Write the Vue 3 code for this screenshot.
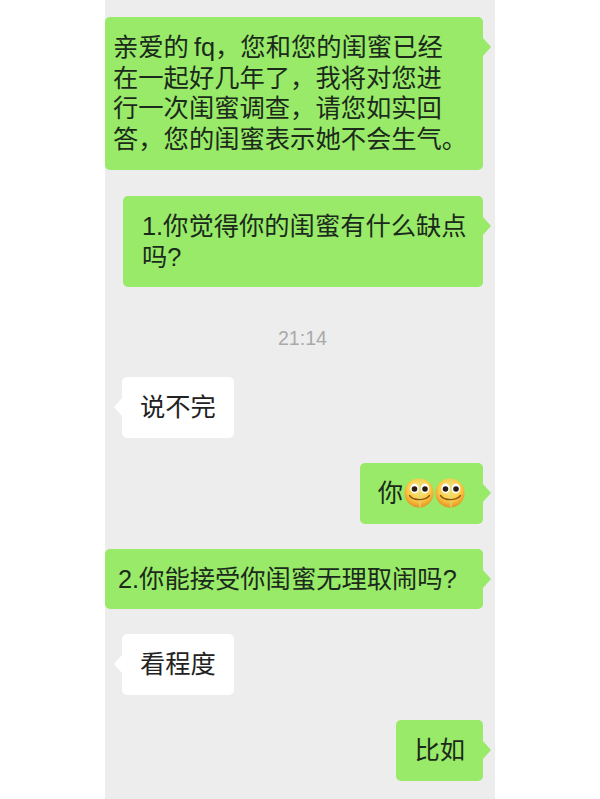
<script setup>
const topMessages = [
  { id: 1, side: 'right', kind: 'intro', lines: ['亲爱的\u2009fq\uFF0C您和您的闺蜜已经', '在一起好几年了\uFF0C我将对您进', '行一次闺蜜调查\uFF0C请您如实回', '答\uFF0C您的闺蜜表示她不会生气。'] },
  { id: 2, side: 'right', kind: 'question', lines: ['1.你觉得你的闺蜜有什么缺点', '吗?'] }
]

const bottomMessages = [
  { id: 3, side: 'left', lines: ['说不完'] },
  { id: 4, side: 'right', lines: ['你'], emoji: 2 },
  { id: 5, side: 'right', kind: 'wide', lines: ['2.你能接受你闺蜜无理取闹吗?'] },
  { id: 6, side: 'left', lines: ['看程度'] },
  { id: 7, side: 'right', lines: ['比如'] }
]
</script>

<template>
  <main class="chat">
    <div
      v-for="msg in topMessages"
      :key="msg.id"
      class="bubble"
      :class="[msg.side, msg.kind]"
    >
      <span v-for="line in msg.lines" :key="line" class="line">{{ line }}</span>
    </div>

    <p class="time">21:14</p>

    <div
      v-for="msg in bottomMessages"
      :key="msg.id"
      class="bubble"
      :class="[msg.side, msg.kind]"
    >
      <span v-for="line in msg.lines" :key="line" class="line">
        {{ line }}
        <svg v-for="n in msg.emoji || 0" :key="n" class="emoji" viewBox="0 0 30 30">
          <defs>
            <radialGradient :id="'face' + n" cx="50%" cy="38%" r="62%">
              <stop offset="0%" stop-color="#fdeb8c" />
              <stop offset="62%" stop-color="#fbcb45" />
              <stop offset="100%" stop-color="#e98f22" />
            </radialGradient>
          </defs>
          <circle cx="15" cy="15" r="14.5" :fill="'url(#face' + n + ')'" />
          <path d="M16 1v28" stroke="#cfe07a" stroke-width="1.2" />
          <ellipse cx="10.5" cy="10.5" rx="4.2" ry="5" fill="#fff" />
          <ellipse cx="21" cy="10.5" rx="4.2" ry="5" fill="#fff" />
          <circle cx="10.5" cy="11" r="2.8" fill="#2a1c10" />
          <circle cx="21" cy="11" r="2.8" fill="#2a1c10" />
          <path d="M5.5 17.5c4 5.5 15.5 5.5 20 0" fill="none" stroke="#8a5512" stroke-width="1.4" stroke-linecap="round" />
        </svg>
      </span>
    </div>
  </main>
</template>

<style scoped>
.chat {
  width: 390px;
  height: 799px;
  margin: 0 auto;
  padding-top: 17px;
  overflow: hidden;
  box-sizing: border-box;
  display: flex;
  flex-direction: column;
  align-items: flex-start;
  background: #ededed;
  font-family: "Liberation Sans", "Noto Sans CJK SC", sans-serif;
  font-size: 25.3px;
  line-height: 30.7px;
  color: #1b2a1b;
}

.bubble {
  flex: none;
  position: relative;
  box-sizing: border-box;
  padding: 15px 18px;
  margin-bottom: 25px;
  border-radius: 5px;
  background: #98ea68;
  white-space: nowrap;
}

.bubble.right {
  align-self: flex-end;
  margin-right: 12px;
}

.bubble.left {
  margin-left: 17px;
  background: #fff;
  color: #222;
}

.bubble::after {
  content: "";
  position: absolute;
  top: 21px;
  width: 0;
  height: 0;
  border-top: 9px solid transparent;
  border-bottom: 9px solid transparent;
}

.bubble.right::after {
  right: -8px;
  border-left: 8px solid #98ea68;
}

.bubble.left::after {
  left: -8px;
  border-right: 8px solid #fff;
}

.bubble.intro {
  width: 378px;
  padding-left: 8px;
  margin-bottom: 26px;
}

.bubble.question {
  width: 360px;
  padding-left: 19px;
}

.bubble.wide {
  width: 378px;
  padding-left: 13px;
}

.line {
  display: flex;
  align-items: center;
}

.emoji {
  width: 30px;
  height: 30px;
  flex: none;
  margin-left: 1px;
}

.time {
  flex: none;
  align-self: center;
  margin: 14px 0 27px;
  padding-left: 5px;
  font-size: 19.6px;
  line-height: 24px;
  color: #a9a9a9;
}
</style>

<style>
body {
  background: #fff;
}
</style>
